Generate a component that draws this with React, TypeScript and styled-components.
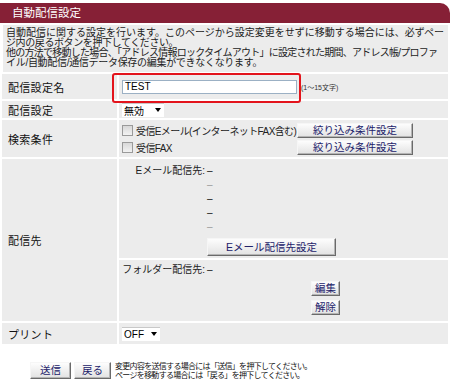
import React from "react";
import styled, { createGlobalStyle } from "styled-components";

const GlobalStyle = createGlobalStyle`
  body {
    margin: 0;
    background: #fff;
    font-family: "Liberation Sans", "Noto Sans CJK JP", sans-serif;
    color: #111;
  }
`;

const Page = styled.div`
  width: 460px;
  padding-top: 3px;
`;

const Header = styled.div`
  width: 450px;
  height: 20px;
  box-sizing: border-box;
  padding-left: 12px;
  background: #862036;
  border-top-right-radius: 10px;
  color: #fff;
  font-size: 11.5px;
  line-height: 20px;
`;

const Intro = styled.div`
  margin: 2px 12px 0 3px;
  padding: 3px 3px 4px;
  background: #ececec;
  font-size: 10px;
  line-height: 10px;
  color: #222;
`;

const IntroLine = styled.div<{ $squeeze?: number }>`
  white-space: nowrap;
  letter-spacing: ${(p) => p.$squeeze ?? 0}px;
`;

const Table = styled.div`
  margin: 2px 12px 0 2px;
  display: grid;
  grid-template-columns: 115px 1fr;
  grid-template-rows: 25px 17px 37px 162px 21px;
  gap: 2px;
  background: #fff;
`;

const Label = styled.div`
  display: flex;
  align-items: center;
  padding-left: 6px;
  background: #ececec;
  font-size: 11px;
  letter-spacing: 0.3px;
  color: #111;
`;

const Cell = styled.div`
  display: flex;
  align-items: center;
  padding-left: 3px;
  background: #ececec;
  font-size: 10px;
`;

const InputWrap = styled.div`
  position: relative;
  display: flex;
  align-items: center;
`;

const TextInput = styled.input`
  width: 175px;
  height: 14px;
  box-sizing: border-box;
  margin: 0;
  padding: 0 2px;
  border: 1px solid #9bb0c4;
  background: #fff;
  font-family: "Liberation Sans", sans-serif;
  font-size: 10px;
  color: #000;
  outline: none;
`;

const Highlight = styled.span`
  position: absolute;
  left: -10px;
  top: -7px;
  right: -4px;
  bottom: -9px;
  border: 2px solid #e3141c;
  border-radius: 3px;
  pointer-events: none;
`;

const Hint = styled.span`
  margin-left: 4px;
  font-size: 7px;
  color: #333;
  white-space: nowrap;
`;

const Select = styled.div<{ $w: number }>`
  display: inline-flex;
  align-items: center;
  justify-content: space-between;
  width: ${(p) => p.$w}px;
  height: 14px;
  box-sizing: border-box;
  padding: 0 3px 0 2px;
  background: #fff;
  border-top: 1px solid #c8c8c8;
  font-size: 10px;
  color: #000;
`;

const Arrow = styled.span`
  width: 0;
  height: 0;
  border-left: 3px solid transparent;
  border-right: 3px solid transparent;
  border-top: 4px solid #000;
`;

const FilterGrid = styled.div`
  display: grid;
  grid-template-columns: 175px 116px;
  grid-auto-rows: 15px;
  row-gap: 2px;
  align-items: center;
`;

const CheckLabel = styled.label`
  display: flex;
  align-items: center;
  gap: 3px;
  font-size: 10px;
  letter-spacing: -0.6px;
  white-space: nowrap;
  color: #222;
`;

const Box = styled.span`
  width: 9px;
  height: 9px;
  border: 1px solid #9a9a9a;
  background: linear-gradient(#d8d8d8, #f2f2f2);
`;

const Button = styled.button<{ $w: number; $h?: number }>`
  width: ${(p) => p.$w}px;
  height: ${(p) => p.$h ?? 15}px;
  box-sizing: border-box;
  margin: 0;
  padding: 0;
  border: 1px solid;
  border-color: #f6f6f6 #6a6a6a #6a6a6a #f6f6f6;
  box-shadow: inset -1px -1px 0 #b4b4b4;
  background: linear-gradient(#fdfdfd, #e2e2e2);
  font-family: "Liberation Sans", "Noto Sans CJK JP", sans-serif;
  font-size: 10.5px;
  line-height: 1;
  color: #22226a;
  white-space: nowrap;
`;

const DestCell = styled.div`
  display: flex;
  flex-direction: column;
  gap: 2px;
`;

const DestBlock = styled.div<{ $h?: number }>`
  ${(p) => (p.$h ? `height: ${p.$h}px;` : "flex: 1;")}
  padding-top: ${(p) => (p.$h ? 5 : 3)}px;
  box-sizing: border-box;
  background: #ececec;
  display: grid;
  grid-template-columns: 86px auto;
  grid-auto-rows: min-content;
  column-gap: 2px;
  align-content: start;
  font-size: 10px;
  color: #222;
`;

const DestName = styled.div`
  height: 14px;
  line-height: 14px;
  text-align: right;
  white-space: nowrap;
`;

const DestValue = styled.div<{ $muted?: boolean }>`
  height: 14px;
  line-height: 14px;
  color: ${(p) => (p.$muted ? "#9a9a9a" : "#111")};
`;

const DestActions = styled.div<{ $indent: number }>`
  grid-column: 2;
  display: flex;
  flex-direction: column;
  gap: 4px;
  margin-top: 4px;
  padding-left: ${(p) => p.$indent}px;
`;

const Footer = styled.div`
  display: flex;
  align-items: flex-start;
  gap: 3px;
  margin-top: 18px;
  padding-left: 30px;
`;

const Note = styled.div`
  margin-left: 1px;
  font-size: 8px;
  line-height: 9px;
  letter-spacing: -0.7px;
  color: #111;
  white-space: nowrap;
`;

const emailDests = [false, true, false, false, true];

export default function App() {
  return (
    <Page>
      <GlobalStyle />
      <Header>自動配信設定</Header>
      <Intro>
        <IntroLine>
          自動配信に関する設定を行います。このページから設定変更をせずに移動する場合には、必ずペー
        </IntroLine>
        <IntroLine $squeeze={-0.4}>ジ内の戻るボタンを押下してください。</IntroLine>
        <IntroLine $squeeze={-0.75}>
          他の方法で移動した場合、「アドレス情報ロックタイムアウト」に設定された期間、アドレス帳/プロファ
        </IntroLine>
        <IntroLine $squeeze={-0.3}>
          イル/自動配信/通信データ保存の編集ができなくなります。
        </IntroLine>
      </Intro>

      <Table>
        <Label>配信設定名</Label>
        <Cell>
          <InputWrap>
            <TextInput defaultValue="TEST" />
            <Highlight />
          </InputWrap>
          <Hint>(1～15文字)</Hint>
        </Cell>

        <Label>配信設定</Label>
        <Cell>
          <Select $w={42}>
            無効
            <Arrow />
          </Select>
        </Cell>

        <Label>検索条件</Label>
        <Cell>
          <FilterGrid>
            <CheckLabel>
              <Box />
              受信Eメール(インターネットFAX含む)
            </CheckLabel>
            <Button $w={116}>絞り込み条件設定</Button>
            <CheckLabel>
              <Box />
              受信FAX
            </CheckLabel>
            <Button $w={116}>絞り込み条件設定</Button>
          </FilterGrid>
        </Cell>

        <Label>配信先</Label>
        <DestCell>
          <DestBlock $h={99}>
            {emailDests.map((muted, i) => (
              <React.Fragment key={i}>
                <DestName>{i === 0 ? "Eメール配信先:" : ""}</DestName>
                <DestValue $muted={muted}>–</DestValue>
              </React.Fragment>
            ))}
            <DestActions $indent={0}>
              <Button $w={129} $h={18}>
                Eメール配信先設定
              </Button>
            </DestActions>
          </DestBlock>
          <DestBlock>
            <DestName>フォルダー配信先:</DestName>
            <DestValue>–</DestValue>
            <DestActions $indent={104}>
              <Button $w={29}>編集</Button>
              <Button $w={29}>解除</Button>
            </DestActions>
          </DestBlock>
        </DestCell>

        <Label>プリント</Label>
        <Cell>
          <Select $w={38}>
            OFF
            <Arrow />
          </Select>
        </Cell>
      </Table>

      <Footer>
        <Button $w={41} $h={17}>
          送信
        </Button>
        <Button $w={37} $h={17}>
          戻る
        </Button>
        <Note>
          変更内容を送信する場合には「送信」を押下してください。
          <br />
          ページを移動する場合には「戻る」を押下してください。
        </Note>
      </Footer>
    </Page>
  );
}
